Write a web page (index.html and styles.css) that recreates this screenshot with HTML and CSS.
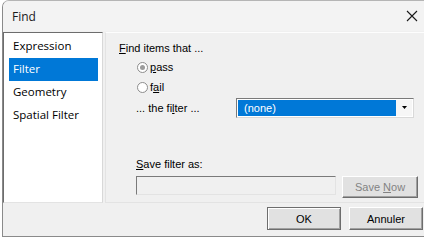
FILE: index.html
```html
<!DOCTYPE html>
<html>
<head>
<meta charset="utf-8">
<link rel="stylesheet" href="styles.css">
</head>
<body>
<div class="window">
  <div class="titlebar">
    <span class="title">Find</span>
    <svg class="close" width="12" height="12" viewBox="0 0 12 12"><path d="M1 1 L11 11 M11 1 L1 11" stroke="#1a1a1a" stroke-width="1.1" fill="none"/></svg>
  </div>
  <div class="body">
    <div class="main">
      <ul class="list">
        <li>Expression</li>
        <li class="sel">Filter</li>
        <li>Geometry</li>
        <li>Spatial Filter</li>
      </ul>
      <div class="panel">
        <div class="lbl"><u>F</u>ind items that ...</div>
        <div class="radios">
          <div class="radio"><span class="dot on"></span><span><u>p</u>ass</span></div>
          <div class="radio"><span class="dot"></span><span>f<u>a</u>il</span></div>
        </div>
        <div class="filterrow">
          <span class="flbl">... the fi<u>l</u>ter ...</span>
          <div class="combo"><span class="val">(none)</span><span class="arrow"><svg width="5" height="3" viewBox="0 0 5 3"><path d="M0 0 H5 L2.5 3 Z" fill="#000"/></svg></span></div>
        </div>
        <div class="save">
          <div class="lbl2"><u>S</u>ave filter as:</div>
          <div class="saverow">
            <div class="input"></div>
            <div class="btn dis"><span>Save <u>N</u>ow</span></div>
          </div>
        </div>
      </div>
    </div>
    <div class="footer">
      <div class="btn ok"><span>OK</span></div>
      <div class="btn"><span>Annuler</span></div>
    </div>
  </div>
</div>
</body>
</html>
```

FILE: styles.css
```css
html, body { margin: 0; padding: 0; }
body { width: 424px; height: 238px; background: #ffffff; overflow: hidden; font-family: "Liberation Sans", Arial, sans-serif; font-size: 11px; color: #000; }
.window { box-sizing: border-box; width: 424px; height: 237px; margin-left: 2px; border-left: 1px solid #8a8a8a; border-top: 1px solid #b5b5b5; border-bottom: 1px solid #8a8a8a; border-top-left-radius: 7px; background: #f0f0f0; display: flex; flex-direction: column; overflow: hidden; }
.titlebar { height: 30px; background: #f3f3f3; display: flex; align-items: center; justify-content: space-between; padding: 0 6px 0 9px; flex: none; }
.title { font-family: "Open Sans", "Noto Sans", sans-serif; font-size: 12px; color: #1a1a1a; }
.close { margin-right: 2px; }
.body { flex: 1; display: flex; flex-direction: column; }
.main { display: flex; height: 171px; padding-top: 1px; }
.list { list-style: none; margin: 0; padding: 2px 4px 0 5px; width: 100px; box-sizing: border-box; background: #fff; border-top: 1px solid #6d6d6d; border-left: 1px solid #6d6d6d; border-right: 1px solid #d8d8d8; border-bottom: 1px solid #e3e3e3; font-family: "Open Sans", "Noto Sans", sans-serif; font-size: 11.5px; font-weight: 500; }
.list li { height: 23px; line-height: 22px; padding-left: 4px; }
.list li.sel { background: #0078d7; color: #fff; }
.panel { flex: 1; margin-left: 2px; border-left: 1px solid #e3e3e3; border-top: 1px solid #fdfdfd; border-bottom: 1px solid #e3e3e3; padding: 8px 0 0 13px; display: flex; flex-direction: column; }
.lbl { height: 14px; line-height: 14px; }
.radios { padding-left: 18px; margin-top: 2px; }
.radio { display: flex; align-items: center; height: 20px; gap: 2px; }
.dot { width: 11px; height: 11px; box-sizing: border-box; border: 1px solid #8d8d8d; border-radius: 50%; background: #fff; display: flex; align-items: center; justify-content: center; }
.dot.on::after { content: ""; width: 5px; height: 5px; border-radius: 50%; background: #9c9c9c; }
.filterrow { display: flex; align-items: center; margin-top: 0; padding-left: 17px; height: 21px; }
.flbl { width: 100px; }
.combo { width: 178px; height: 20px; box-sizing: border-box; border: 1px solid #7a7a7a; border-bottom-color: #d9d9d9; border-right-color: #d9d9d9; background: #fff; display: flex; padding: 1px; }
.val { flex: 1; background: #0078d7; color: #fff; line-height: 17px; padding-left: 6px; font-size: 11px; }
.arrow { width: 16px; display: flex; align-items: center; justify-content: center; background: #f6f6f6; }
.save { margin-top: 39px; padding-left: 17px; }
.lbl2 { height: 14px; line-height: 14px; }
.saverow { display: flex; gap: 6px; margin-top: 5px; }
.input { width: 200px; height: 19px; box-sizing: border-box; background: #f0f0f0; border: 1px solid #7a7a7a; border-right-color: #e3e3e3; border-bottom-color: #e3e3e3; }
.btn { box-sizing: border-box; height: 22px; width: 75px; display: flex; align-items: center; justify-content: center; background: #e1e1e1; border: 1px solid #fff; border-right-color: #6d6d6d; border-bottom-color: #6d6d6d; box-shadow: inset -1px -1px 0 #a0a0a0; }
.btn.dis { color: #838383; width: 76px; }
.footer { display: flex; justify-content: flex-end; gap: 8px; padding: 4px 3px 0 0; }
.footer .btn { height: 23px; width: 74px; }
.btn.ok { border: 1px solid #6d6d6d; box-shadow: inset 1px 1px 0 #fff, inset -1px -1px 0 #a0a0a0; }
u { text-decoration: underline; text-underline-offset: 1px; }
```
